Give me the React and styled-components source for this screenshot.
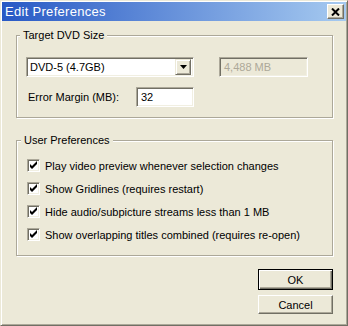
import React from 'react';
import styled, { createGlobalStyle } from 'styled-components';

const prefs = [
  'Play video preview whenever selection changes',
  'Show Gridlines (requires restart)',
  'Hide audio/subpicture streams less than 1 MB',
  'Show overlapping titles combined (requires re-open)',
];

function CheckMark() {
  return (
    <svg width="13" height="13" viewBox="0 0 13 13">
      <polygon points="3,5 5,7 10,2 10,5 5,10 3,8" fill="#000" />
    </svg>
  );
}

function DownArrow() {
  return (
    <svg width="7" height="4" viewBox="0 0 7 4">
      <polygon points="0,0 7,0 3.5,4" fill="#000" />
    </svg>
  );
}

function CloseGlyph() {
  return (
    <svg width="9" height="8" viewBox="0 0 9 8">
      <path d="M1 0.5 L8 7.5 M8 0.5 L1 7.5" stroke="#000" strokeWidth="2" />
    </svg>
  );
}

export default function App() {
  return (
    <>
      <GlobalStyle />
      <Window>
        <TitleBar>
          <Title>Edit Preferences</Title>
          <CloseButton>
            <CloseGlyph />
          </CloseButton>
        </TitleBar>
        <Body>
          <Group>
            <Legend>Target DVD Size</Legend>
            <Row>
              <Combo>
                <FieldText>DVD-5 (4.7GB)</FieldText>
                <ComboButton>
                  <DownArrow />
                </ComboButton>
              </Combo>
              <Field $width={89} $disabled>
                <FieldText>4,488 MB</FieldText>
              </Field>
            </Row>
            <Row $top={10}>
              <Label>Error Margin (MB):</Label>
              <Field $width={58}>
                <FieldText>32</FieldText>
              </Field>
            </Row>
          </Group>

          <Group $top={16} $checks>
            <Legend>User Preferences</Legend>
            {prefs.map((text) => (
              <CheckRow key={text}>
                <CheckBox>
                  <CheckMark />
                </CheckBox>
                <span>{text}</span>
              </CheckRow>
            ))}
          </Group>

          <Buttons>
            <Button $default>OK</Button>
            <Button>Cancel</Button>
          </Buttons>
        </Body>
      </Window>
    </>
  );
}

const GlobalStyle = createGlobalStyle`
  html, body {
    margin: 0;
    padding: 0;
    background: #ece9d8;
  }
  body {
    font-family: "Liberation Sans", Arial, sans-serif;
    font-size: 11px;
    color: #000;
  }
  * { box-sizing: border-box; }
`;

const Window = styled.div`
  width: 348px;
  height: 326px;
  background: #ece9d8;
  border: 1px solid;
  border-color: #ece9d8 #716f64 #716f64 #ece9d8;
  box-shadow: inset 1px 1px 0 #fff, inset -1px -1px 0 #aca899;
  padding: 1px;
  display: flex;
  flex-direction: column;
`;

const TitleBar = styled.div`
  height: 19px;
  display: flex;
  align-items: center;
  justify-content: space-between;
  padding: 0 2px 0 3px;
  background: linear-gradient(to right, #2859c5, #a6caf0);
`;

const Title = styled.div`
  color: #fff;
  font-size: 13px;
  letter-spacing: 0.3px;
`;

const CloseButton = styled.div`
  width: 17px;
  height: 15px;
  display: flex;
  align-items: center;
  justify-content: center;
  background: #ece9d8;
  border: 1px solid;
  border-color: #fff #716f64 #716f64 #fff;
  box-shadow: inset -1px -1px 0 #aca899;
`;

const Body = styled.div`
  flex: 1;
  display: flex;
  flex-direction: column;
  padding: 8px 13px 0 14px;
`;

const Group = styled.fieldset`
  margin: ${(p) => p.$top || 0}px 0 0;
  padding: ${(p) => (p.$checks ? '12px 10px 14px' : '15px 9px 10px')};
  border: 1px solid #aca899;
  box-shadow: inset 1px 1px 0 #fff, 1px 1px 0 #fff;
  min-width: 0;
`;

const Legend = styled.legend`
  padding: 0 3px;
  margin-left: -6px;
  line-height: 13px;
  background: #ece9d8;
`;

const Row = styled.div`
  display: flex;
  align-items: center;
  margin-top: ${(p) => p.$top || 0}px;
`;

const sunken = `
  border: 1px solid;
  border-color: #aca899 #fff #fff #aca899;
  box-shadow: inset 1px 1px 0 #716f64, inset -1px -1px 0 #f1efe2;
`;

const Combo = styled.div`
  ${sunken}
  width: 168px;
  height: 20px;
  background: #fff;
  display: flex;
  align-items: center;
  padding: 2px;
  margin-right: 25px;
`;

const ComboButton = styled.div`
  margin-left: auto;
  width: 16px;
  height: 16px;
  display: flex;
  align-items: center;
  justify-content: center;
  background: #ece9d8;
  border: 1px solid;
  border-color: #ece9d8 #716f64 #716f64 #ece9d8;
  box-shadow: inset 1px 1px 0 #fff, inset -1px -1px 0 #aca899;
`;

const Field = styled.div`
  ${sunken}
  width: ${(p) => p.$width}px;
  height: 20px;
  display: flex;
  align-items: center;
  padding: 0 3px;
  background: ${(p) => (p.$disabled ? '#ece9d8' : '#fff')};
  color: ${(p) => (p.$disabled ? '#aca899' : '#000')};
`;

const FieldText = styled.span`
  padding-left: 1px;
  white-space: nowrap;
`;

const Label = styled.span`
  width: 110px;
  padding-left: 2px;
`;

const CheckRow = styled.div`
  display: flex;
  align-items: center;
  gap: 5px;
  height: 13px;
  & + & {
    margin-top: 10px;
  }
`;

const CheckBox = styled.div`
  width: 13px;
  height: 13px;
  background: #fff;
  position: relative;
  border: 1px solid;
  border-color: #aca899 #fff #fff #aca899;
  box-shadow: inset 1px 1px 0 #716f64, inset -1px -1px 0 #f1efe2;
  svg {
    position: absolute;
    left: -1px;
    top: -1px;
  }
`;

const Buttons = styled.div`
  display: flex;
  flex-direction: column;
  align-items: flex-end;
  gap: 5px;
  margin-top: 13px;
`;

const Button = styled.div`
  width: 75px;
  height: ${(p) => (p.$default ? 21 : 19)}px;
  display: flex;
  align-items: center;
  justify-content: center;
  background: #ece9d8;
  border: 1px solid;
  border-color: ${(p) => (p.$default ? '#000' : '#fff #716f64 #716f64 #fff')};
  box-shadow: ${(p) =>
    p.$default
      ? 'inset 1px 1px 0 #fff, inset -1px -1px 0 #716f64, inset -2px -2px 0 #aca899'
      : 'inset -1px -1px 0 #aca899'};
`;
